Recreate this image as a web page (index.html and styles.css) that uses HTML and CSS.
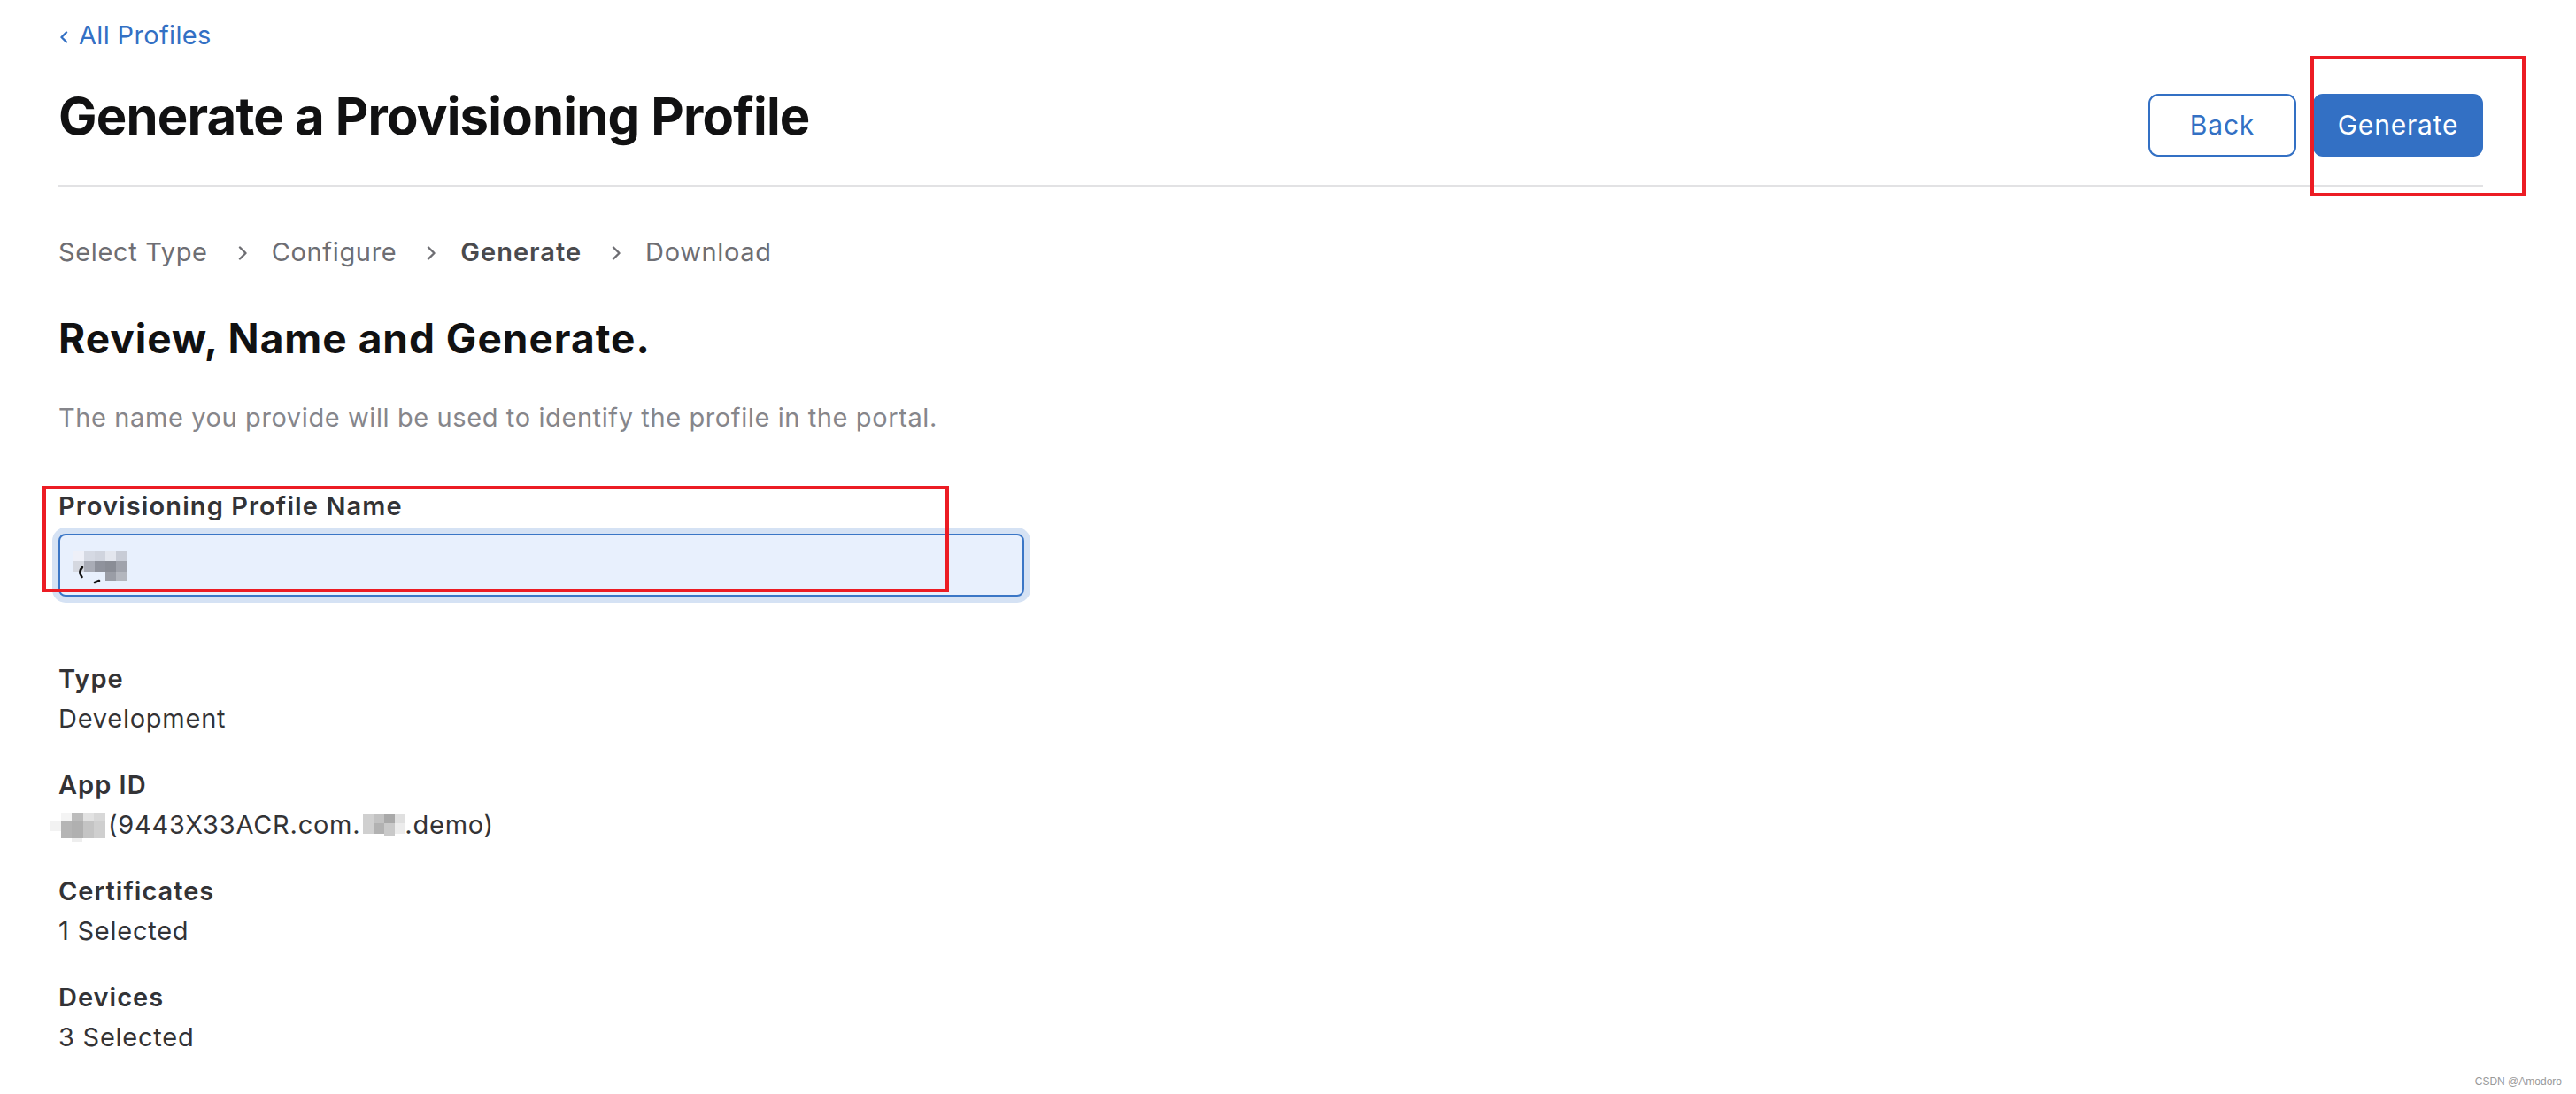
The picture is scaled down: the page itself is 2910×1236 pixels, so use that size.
FILE: index.html
```html
<!DOCTYPE html>
<html lang="en">
<head>
<meta charset="utf-8">
<title>Generate a Provisioning Profile</title>
<link rel="stylesheet" href="styles.css">
</head>
<body>
<main class="page">
  <a class="back-link" href="#">
    <svg class="back-chev" width="10" height="14" viewBox="0 0 10 14"><path d="M8 1.5 L2.5 7 L8 12.5" fill="none" stroke="currentColor" stroke-width="2.4" stroke-linecap="round" stroke-linejoin="round"/></svg>
    <span>All Profiles</span>
  </a>

  <header class="page-header">
    <h1 class="page-title">Generate a Provisioning Profile</h1>
    <div class="actions">
      <button class="btn btn-secondary" type="button">Back</button>
      <button class="btn btn-primary" type="button">Generate</button>
    </div>
  </header>

  <nav class="steps">
    <span class="step">Select Type</span>
    <svg class="step-chev" width="12" height="16" viewBox="0 0 12 16"><path d="M3 1.5 L9.5 8 L3 14.5" fill="none" stroke="currentColor" stroke-width="2.4" stroke-linecap="round" stroke-linejoin="round"/></svg>
    <span class="step">Configure</span>
    <svg class="step-chev" width="12" height="16" viewBox="0 0 12 16"><path d="M3 1.5 L9.5 8 L3 14.5" fill="none" stroke="currentColor" stroke-width="2.4" stroke-linecap="round" stroke-linejoin="round"/></svg>
    <span class="step step-active">Generate</span>
    <svg class="step-chev" width="12" height="16" viewBox="0 0 12 16"><path d="M3 1.5 L9.5 8 L3 14.5" fill="none" stroke="currentColor" stroke-width="2.4" stroke-linecap="round" stroke-linejoin="round"/></svg>
    <span class="step">Download</span>
  </nav>

  <section class="content">
    <h2 class="section-title">Review, Name and Generate.</h2>
    <p class="section-desc">The name you provide will be used to identify the profile in the portal.</p>

    <div class="field">
      <label class="field-label">Provisioning Profile Name</label>
      <div class="field-input">
        <svg class="mosaic" width="64" height="40" viewBox="0 0 64 40">
          <rect x="0" y="0" width="12" height="12" fill="#eef0f8"/>
          <rect x="12" y="0" width="12" height="12" fill="#d5d9e3"/>
          <rect x="24" y="0" width="12" height="12" fill="#d0d4de"/>
          <rect x="36" y="0" width="12" height="12" fill="#e3e6ee"/>
          <rect x="48" y="0" width="12" height="12" fill="#c8ccd6"/>
          <rect x="0" y="12" width="12" height="12" fill="#d5d8e0"/>
          <rect x="12" y="12" width="12" height="12" fill="#a9acb6"/>
          <rect x="24" y="12" width="12" height="12" fill="#8f929c"/>
          <rect x="36" y="12" width="12" height="12" fill="#8a8d96"/>
          <rect x="48" y="12" width="12" height="12" fill="#a0a3ac"/>
          <rect x="36" y="24" width="12" height="10" fill="#9a9da6"/>
          <rect x="48" y="24" width="12" height="10" fill="#b3b6be"/>
          <path d="M10 19 Q5 24 9.5 30" fill="none" stroke="#111" stroke-width="2.6" stroke-linecap="round"/>
          <path d="M24 36 L29 34" fill="none" stroke="#111" stroke-width="2.6" stroke-linecap="round"/>
        </svg>
      </div>
    </div>

    <dl class="details">
      <div class="detail">
        <dt>Type</dt>
        <dd>Development</dd>
      </div>
      <div class="detail">
        <dt>App ID</dt>
        <dd><svg class="mosaic mosaic-a" width="66" height="32" viewBox="0 0 66 32">
            <rect x="0" y="8" width="12" height="12" fill="#f2f2f2"/>
            <rect x="12" y="0" width="12" height="8" fill="#f4f4f4"/>
            <rect x="12" y="8" width="12" height="20" fill="#b5b5b5"/>
            <rect x="24" y="0" width="13" height="8" fill="#bcbcbc"/>
            <rect x="24" y="8" width="13" height="20" fill="#b0b0b0"/>
            <rect x="37" y="0" width="12" height="8" fill="#e2e2e2"/>
            <rect x="37" y="8" width="12" height="20" fill="#c4c4c4"/>
            <rect x="49" y="0" width="13" height="8" fill="#d8d8d8"/>
            <rect x="49" y="8" width="13" height="20" fill="#cfcfcf"/>
            <rect x="24" y="28" width="12" height="4" fill="#eeeeee"/>
          </svg>(9443X33ACR.com.<svg class="mosaic mosaic-b" width="50" height="26" viewBox="0 0 50 26">
            <rect x="0" y="0" width="12" height="22" fill="#d0d0d0"/>
            <rect x="12" y="0" width="12" height="10" fill="#c2c2c2"/>
            <rect x="12" y="10" width="12" height="12" fill="#b2b2b2"/>
            <rect x="24" y="0" width="12" height="10" fill="#a9a9a9"/>
            <rect x="24" y="10" width="12" height="14" fill="#c9c9c9"/>
            <rect x="36" y="0" width="12" height="10" fill="#e0e0e0"/>
            <rect x="36" y="10" width="12" height="12" fill="#ececec"/>
          </svg>.demo)</dd>
      </div>
      <div class="detail">
        <dt>Certificates</dt>
        <dd>1 Selected</dd>
      </div>
      <div class="detail">
        <dt>Devices</dt>
        <dd>3 Selected</dd>
      </div>
    </dl>
  </section>
</main>

<div class="annot annot-name"></div>
<div class="annot annot-generate"></div>
<div class="watermark">CSDN @Amodoro</div>
</body>
</html>
```

FILE: styles.css
```css
* { box-sizing: border-box; }

html, body {
  margin: 0;
  padding: 0;
  background: #ffffff;
}

body {
  font-family: Inter, "Noto Sans", "Liberation Sans", sans-serif;
  font-size: 29px;
  line-height: 44px;
  letter-spacing: 0.65px;
  color: #333336;
  position: relative;
  min-height: 1236px;
}

.page {
  padding: 18px 105px 0 66px;
}

.back-link {
  display: flex;
  align-items: center;
  gap: 12px;
  height: 44px;
  color: #3370c4;
  text-decoration: none;
  font-size: 29px;
  line-height: 44px;
  letter-spacing: 0.35px;
}

.back-chev { display: block; margin-left: 1px; margin-top: 3px; }

.page-header {
  margin-top: 37px;
  display: flex;
  align-items: baseline;
  justify-content: space-between;
  padding-bottom: 32px;
  border-bottom: 2px solid #e2e2e4;
}

.page-title {
  margin: 0;
  font-size: 58px;
  line-height: 64px;
  font-weight: 700;
  color: #111112;
  letter-spacing: -0.8px;
}

.actions {
  display: flex;
  align-items: baseline;
  gap: 19px;
}

.btn {
  font-family: inherit;
  font-size: 30px;
  line-height: 35px;
  letter-spacing: 0.8px;
  padding: 16px 0;
  border: 2px solid #3370c4;
  border-radius: 11px;
  cursor: pointer;
  text-align: center;
}

.btn-secondary {
  width: 167px;
  background: #ffffff;
  color: #3370c4;
}

.btn-primary {
  width: 192px;
  background: #3370c4;
  color: #ffffff;
}

.steps {
  margin-top: 52px;
  display: flex;
  align-items: center;
  height: 44px;
  color: #6e6e73;
}

.step-chev {
  display: block;
  margin: 2px 27px 0 33px;
  color: #6e6e73;
}

.step-active {
  font-weight: 600;
  letter-spacing: 1px;
  color: #4a4a4d;
}

.section-title {
  margin: 48px 0 0;
  font-size: 46px;
  line-height: 54px;
  font-weight: 700;
  color: #111112;
  letter-spacing: 1px;
}

.section-desc {
  margin: 41px 0 0;
  color: #86868b;
  letter-spacing: 0.6px;
}

.field {
  margin-top: 56px;
}

.field-label {
  display: block;
  font-weight: 600;
  letter-spacing: 1.1px;
  color: #333336;
}

.field-input {
  margin-top: 9px;
  width: 1091px;
  height: 71px;
  border: 2px solid #3a76c6;
  border-radius: 8px;
  background: #e8f0fd;
  box-shadow: 0 0 0 7px #d5e2f4;
  padding: 17px 0 0 15px;
}

.field-input .mosaic { display: block; }

.details {
  margin: 70px 0 0;
  display: flex;
  flex-direction: column;
  gap: 30px;
}

.detail dt {
  font-weight: 600;
  letter-spacing: 1px;
  line-height: 45px;
  color: #333336;
}

.detail dd {
  margin: 0;
  line-height: 45px;
  letter-spacing: 0.75px;
  color: #333336;
}

.mosaic-a {
  vertical-align: -9px;
  margin-left: -9px;
  margin-right: -1px;
}

.mosaic-b {
  vertical-align: -4px;
  margin-left: 3px;
  margin-right: -3px;
}

.annot {
  position: absolute;
  border: 4px solid #ec1c24;
  pointer-events: none;
}

.annot-name {
  left: 48px;
  top: 549px;
  width: 1024px;
  height: 120px;
}

.annot-generate {
  left: 2610px;
  top: 63px;
  width: 243px;
  height: 159px;
}

.watermark {
  position: absolute;
  right: 16px;
  top: 1213px;
  font-family: "Liberation Sans", Arial, sans-serif;
  font-size: 12px;
  line-height: 18px;
  letter-spacing: 0;
  color: #9a9a9a;
}
```
